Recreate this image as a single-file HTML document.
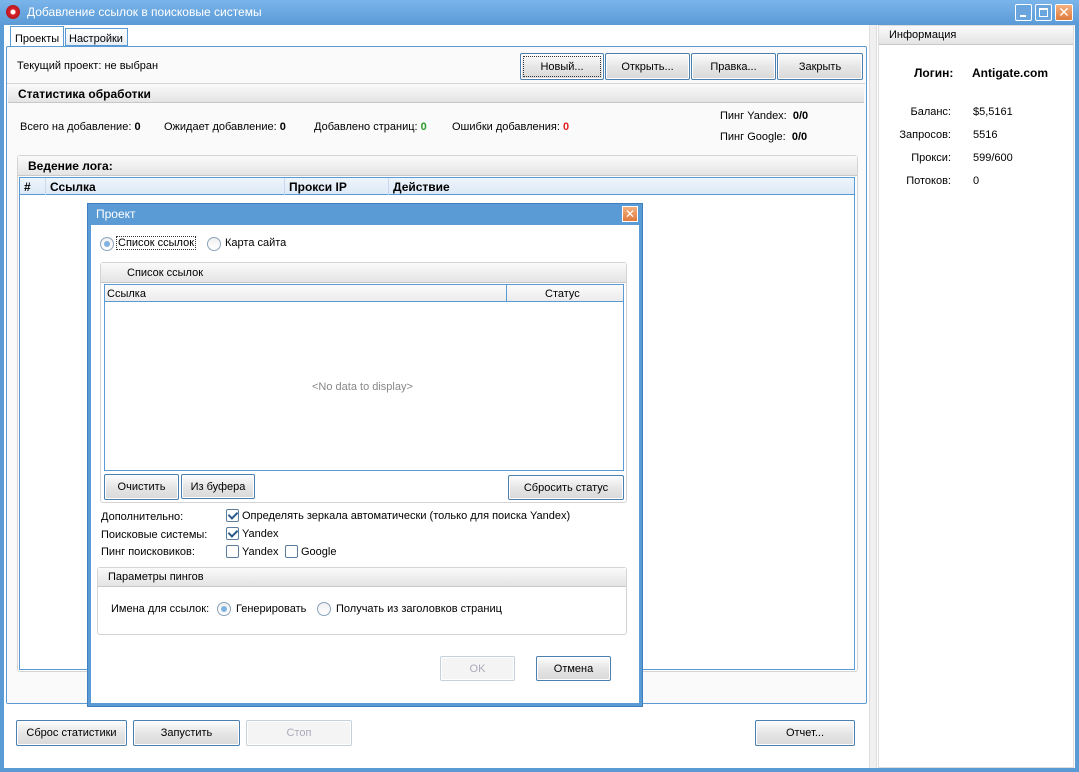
<!DOCTYPE html>
<html><head><meta charset="utf-8"><style>
*{box-sizing:border-box;margin:0;padding:0}
body{width:1079px;height:772px;overflow:hidden;background:#5b9bd5;font-family:"Liberation Sans","DejaVu Sans",sans-serif;font-size:11px;color:#000;position:relative}
.a{position:absolute}
.btn{position:absolute;border:1px solid #4a7fae;border-radius:2px;background:linear-gradient(#fdfdfd,#e6e6e6 50%,#d9d9d9);font-size:11px;box-shadow:inset 0 0 0 1px #fff;display:flex;align-items:center;justify-content:center;line-height:normal!important}
.dis{border-color:#c5d2de;color:#aab;background:#f4f4f4}
.hdr{position:absolute;background:linear-gradient(#fafafa,#e4e4e4);border-bottom:1px solid #c8c8c8}
.grp{position:absolute;border:1px solid #d4d4d4;border-radius:3px;background:#fff}
.rad{position:absolute;width:14px;height:14px;border-radius:50%;border:1px solid #8aa4bd;background:linear-gradient(#f0f0f0,#fff)}
.rad.on::after{content:"";position:absolute;left:3px;top:3px;width:6px;height:6px;border-radius:50%;background:#7fb2e0}
.chk{position:absolute;width:13px;height:13px;border:1px solid #5a7d9e;background:#fff;border-radius:2px}
.chk.on::after{content:"";position:absolute;left:3px;top:0px;width:4px;height:7px;border:solid #2b5a8a;border-width:0 2px 2px 0;transform:rotate(45deg)}
b{font-weight:bold}
</style></head><body>
<div class="a" style="left:0;top:0;width:1079px;height:25px;background:linear-gradient(#7ab5ea,#5a9ad6)"></div>
<div class="a" style="left:6px;top:5px;width:14px;height:14px;border-radius:50%;background:radial-gradient(circle at 50% 50%,#fff 0 2px,#d8202a 3px,#a01018)"></div>
<div class="a" style="left:27px;top:5px;color:#fff;font-size:12px">Добавление ссылок в поисковые системы</div>
<div class="a" style="left:1015px;top:4px;width:17px;height:17px;border:1px solid #fff;background:#6aa6dd;border-radius:2px"><div class="a" style="left:4px;top:10px;width:6px;height:2px;background:#fff"></div></div>
<div class="a" style="left:1035px;top:4px;width:17px;height:17px;border:1px solid #fff;background:#6aa6dd;border-radius:2px"><div class="a" style="left:3px;top:3px;width:9px;height:9px;border:1px solid #fff;border-top-width:2px"></div></div>
<div class="a" style="left:1055px;top:4px;width:18px;height:17px;border:1px solid #fff;background:linear-gradient(#f4b080,#e07a3c);border-radius:2px;color:#fff;font-size:14px;text-align:center;line-height:15px">✕</div>
<div class="a" style="left:4px;top:25px;width:1071px;height:743px;background:#fff"></div>
<div class="a" style="left:10px;top:26px;width:54px;height:21px;border:1px solid #5b9bd5;border-bottom:none;background:#fff;padding:6px 0 0 4px">Проекты</div>
<div class="a" style="left:65px;top:28px;width:63px;height:18px;border:1px solid #5b9bd5;background:linear-gradient(#fff,#e8eef5);padding:4px 0 0 3px">Настройки</div>
<div class="a" style="left:6px;top:46px;width:861px;height:658px;border:1px solid #5b9bd5;border-radius:2px;background:#fafafa"></div>
<div class="a" style="left:17px;top:60px">Текущий проект: не выбран</div>
<div class="btn" style="left:520px;top:53px;width:84px;height:27px;outline:1px dotted #333;outline-offset:-4px">Новый...</div>
<div class="btn" style="left:605px;top:53px;width:85px;height:27px">Открыть...</div>
<div class="btn" style="left:691px;top:53px;width:85px;height:27px">Правка...</div>
<div class="btn" style="left:777px;top:53px;width:86px;height:27px">Закрыть</div>
<div class="a" style="left:7px;top:83px;width:858px;height:620px;border-top:1px solid #d6d6d6;background:#fafafa"></div>
<div class="hdr" style="left:8px;top:84px;width:856px;height:19px;padding:3px 0 0 10px;font-weight:bold;font-size:12px">Статистика обработки</div>
<div class="a" style="left:20px;top:121px">Всего на добавление: <b>0</b></div>
<div class="a" style="left:164px;top:121px">Ожидает добавление: <b>0</b></div>
<div class="a" style="left:314px;top:121px">Добавлено страниц: <b style="color:#2a9a2a">0</b></div>
<div class="a" style="left:452px;top:121px">Ошибки добавления: <b style="color:#e02020">0</b></div>
<div class="a" style="left:720px;top:110px">Пинг Yandex: <b>&nbsp;0/0</b></div>
<div class="a" style="left:720px;top:131px">Пинг Google: &nbsp;<b>0/0</b></div>
<div class="grp" style="left:17px;top:155px;width:841px;height:517px"></div>
<div class="hdr" style="left:18px;top:156px;width:839px;height:20px;padding:3px 0 0 10px;font-weight:bold;font-size:12px">Ведение лога:</div>
<div class="a" style="left:19px;top:177px;width:836px;height:493px;border:1px solid #5b9bd5;background:#fff"></div>
<div class="a" style="left:20px;top:178px;width:834px;height:17px;background:linear-gradient(#eef5fc,#dde9f6);border-bottom:1px solid #5b9bd5"></div>
<div class="a" style="left:24px;top:180px;font-weight:bold;font-size:12px">#</div>
<div class="a" style="left:45px;top:178px;width:1px;height:17px;background:#c8d8ea"></div>
<div class="a" style="left:50px;top:180px;font-weight:bold;font-size:12px">Ссылка</div>
<div class="a" style="left:284px;top:178px;width:1px;height:17px;background:#c8d8ea"></div>
<div class="a" style="left:289px;top:180px;font-weight:bold;font-size:12px">Прокси IP</div>
<div class="a" style="left:388px;top:178px;width:1px;height:17px;background:#c8d8ea"></div>
<div class="a" style="left:393px;top:180px;font-weight:bold;font-size:12px">Действие</div>
<div class="btn" style="left:16px;top:720px;width:111px;height:26px">Сброс статистики</div>
<div class="btn" style="left:133px;top:720px;width:107px;height:26px">Запустить</div>
<div class="btn dis" style="left:246px;top:720px;width:106px;height:26px">Стоп</div>
<div class="btn" style="left:755px;top:720px;width:100px;height:26px">Отчет...</div>
<div class="a" style="left:869px;top:25px;width:8px;height:743px;background:#f0f0f0;border-left:1px solid #ddd;border-right:1px solid #ddd"></div>
<div class="a" style="left:878px;top:25px;width:196px;height:743px;background:#fff;border:1px solid #ddd"></div>
<div class="hdr" style="left:879px;top:26px;width:194px;height:19px;padding:3px 0 0 10px">Информация</div>
<div class="a" style="left:914px;top:66px;font-weight:bold;font-size:12px">Логин:</div>
<div class="a" style="left:972px;top:66px;font-weight:bold;font-size:12px">Antigate.com</div>
<div class="a" style="left:878px;top:106px;width:73px;text-align:right">Баланс:</div><div class="a" style="left:973px;top:106px">$5,5161</div>
<div class="a" style="left:878px;top:129px;width:73px;text-align:right">Запросов:</div><div class="a" style="left:973px;top:129px">5516</div>
<div class="a" style="left:878px;top:152px;width:73px;text-align:right">Прокси:</div><div class="a" style="left:973px;top:152px">599/600</div>
<div class="a" style="left:878px;top:175px;width:73px;text-align:right">Потоков:</div><div class="a" style="left:973px;top:175px">0</div>
<div class="a" style="left:87px;top:203px;width:556px;height:504px;background:#5b9bd5;border:1px solid #3f7fbf"></div>
<div class="a" style="left:96px;top:207px;color:#fff;font-size:12px">Проект</div>
<div class="a" style="left:622px;top:206px;width:16px;height:16px;border:1px solid #fff;background:linear-gradient(#f4b080,#e07a3c);color:#fff;font-size:12px;text-align:center;line-height:14px">✕</div>
<div class="a" style="left:91px;top:225px;width:548px;height:478px;background:#fff"></div>
<div class="rad on" style="left:100px;top:237px"></div>
<div class="a" style="left:117px;top:237px;outline:1px dotted #333;padding:0 1px">Список ссылок</div>
<div class="rad" style="left:207px;top:237px"></div>
<div class="a" style="left:225px;top:237px">Карта сайта</div>
<div class="grp" style="left:100px;top:262px;width:527px;height:241px"></div>
<div class="hdr" style="left:101px;top:263px;width:525px;height:20px;padding:4px 0 0 26px">Список ссылок</div>
<div class="a" style="left:104px;top:284px;width:520px;height:187px;border:1px solid #5b9bd5;background:#fff"></div>
<div class="a" style="left:105px;top:285px;width:518px;height:17px;background:linear-gradient(#fbfbfb,#ececec);border-bottom:1px solid #5b9bd5"></div>
<div class="a" style="left:107px;top:288px">Ссылка</div>
<div class="a" style="left:506px;top:285px;width:1px;height:17px;background:#5b9bd5"></div>
<div class="a" style="left:545px;top:288px">Статус</div>
<div class="a" style="left:312px;top:381px;color:#888">&lt;No data to display&gt;</div>
<div class="btn" style="left:104px;top:474px;width:75px;height:26px">Очистить</div>
<div class="btn" style="left:181px;top:474px;width:74px;height:25px">Из буфера</div>
<div class="btn" style="left:508px;top:475px;width:116px;height:25px">Сбросить статус</div>
<div class="a" style="left:101px;top:511px">Дополнительно:</div>
<div class="chk on" style="left:226px;top:509px"></div>
<div class="a" style="left:242px;top:510px">Определять зеркала автоматически (только для поиска Yandex)</div>
<div class="a" style="left:101px;top:529px">Поисковые системы:</div>
<div class="chk on" style="left:226px;top:527px"></div>
<div class="a" style="left:242px;top:528px">Yandex</div>
<div class="a" style="left:101px;top:546px">Пинг поисковиков:</div>
<div class="chk" style="left:226px;top:545px"></div>
<div class="a" style="left:242px;top:546px">Yandex</div>
<div class="chk" style="left:285px;top:545px"></div>
<div class="a" style="left:301px;top:546px">Google</div>
<div class="grp" style="left:97px;top:567px;width:530px;height:68px"></div>
<div class="hdr" style="left:98px;top:568px;width:528px;height:19px;padding:3px 0 0 10px">Параметры пингов</div>
<div class="a" style="left:111px;top:603px">Имена для ссылок:</div>
<div class="rad on" style="left:217px;top:602px"></div>
<div class="a" style="left:236px;top:603px">Генерировать</div>
<div class="rad" style="left:317px;top:602px"></div>
<div class="a" style="left:336px;top:603px">Получать из заголовков страниц</div>
<div class="btn dis" style="left:440px;top:656px;width:75px;height:25px">OK</div>
<div class="btn" style="left:536px;top:656px;width:75px;height:25px">Отмена</div>
</body></html>
